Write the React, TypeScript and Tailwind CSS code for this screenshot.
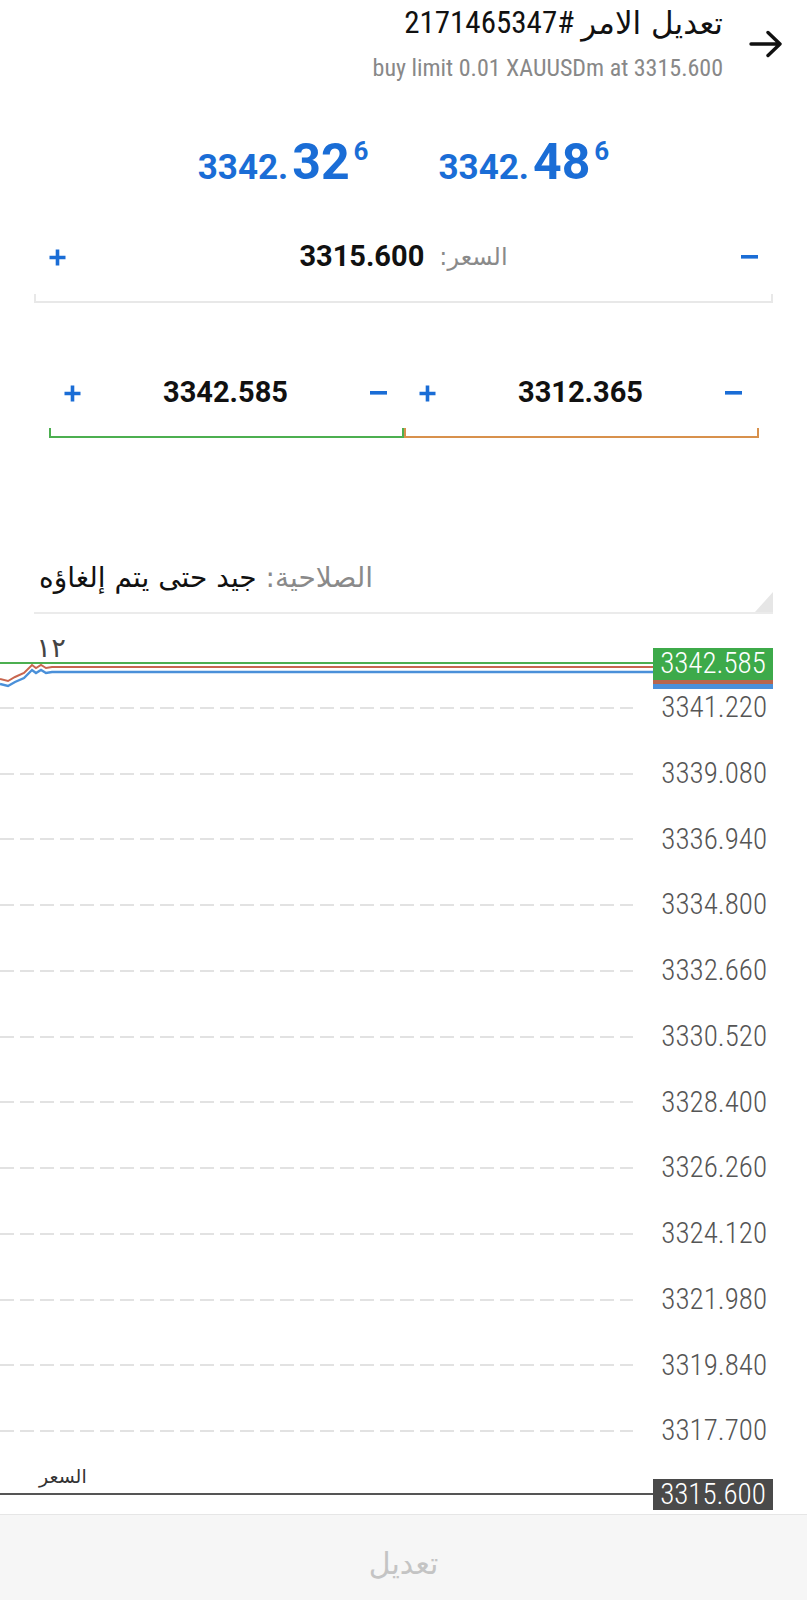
const NARROW = "font-['Liberation_Sans_Narrow','Roboto_Condensed',Roboto,'DejaVu_Sans',sans-serif]";
const ROBOTO = "font-['Roboto','DejaVu_Sans',sans-serif]";
const ARABIC = "font-['DejaVu_Sans',sans-serif]";

const axisLabels = [
  "3341.220",
  "3339.080",
  "3336.940",
  "3334.800",
  "3332.660",
  "3330.520",
  "3328.400",
  "3326.260",
  "3324.120",
  "3321.980",
  "3319.840",
  "3317.700",
];

function PlusIcon() {
  return (
    <svg width="17" height="17" viewBox="0 0 17 17">
      <path d="M8.5 0.5v16M0.5 8.5h16" stroke="#1a6dd6" strokeWidth="3.6" />
    </svg>
  );
}

function MinusIcon() {
  return (
    <svg width="17" height="4" viewBox="0 0 17 4">
      <rect width="17" height="3.6" fill="#1a6dd6" />
    </svg>
  );
}

function ArrowIcon() {
  return (
    <svg width="34" height="28" viewBox="0 0 34 28" fill="none">
      <path d="M2 14H31M19 2.5L31 14L19 25.5" stroke="#111" strokeWidth="3.4" strokeLinecap="round" strokeLinejoin="round" />
    </svg>
  );
}

function Quote({ head, tail }: { head: string; tail: string }) {
  return (
    <div className={`${ROBOTO} flex items-baseline font-bold text-[#1a6dd6] leading-none`}>
      <span className="text-[35px]">{head}</span>
      <span className="ml-[4px] text-[50px]">{tail}</span>
      <span className="ml-[4px] mt-[1px] self-start text-[26px]">6</span>
    </div>
  );
}

function Stepper({ value, line }: { value: string; line: string }) {
  return (
    <div className="flex flex-1 flex-col">
      <div className="flex h-[50px] items-center justify-between pl-[15px] pr-[17px]">
        <PlusIcon />
        <span className={`${ROBOTO} text-[29px] font-bold text-[#111]`}>{value}</span>
        <MinusIcon />
      </div>
      <div className={`mt-[10px] h-[10px] border-x-2 border-b-2 ${line}`} />
    </div>
  );
}

function Chart() {
  return (
    <div className="relative h-[874px] overflow-hidden">
      {/* price lines near the top of the chart */}
      <svg className="absolute left-0 top-[6px]" width="653" height="44" viewBox="0 0 653 44" fill="none">
        <path d="M0 17H653" stroke="#4caf50" strokeWidth="2" />
        <polyline
          points="0,33 8,35 15,31 24,27 32,19 36,22 41,19 46,22 52,21 653,21"
          stroke="#c8664f"
          strokeWidth="2"
        />
        <polyline
          points="0,38 8,40 15,36 24,32 32,24 36,27 41,24 46,27 52,26 653,26"
          stroke="#4a90d9"
          strokeWidth="2.4"
        />
      </svg>
      <span className={`${ARABIC} absolute left-[36px] top-[-13px] text-[28px] text-[#444]`}>١٢</span>

      {/* take profit tag */}
      <div className="absolute right-[34px] top-[8px] flex w-[120px] flex-col">
        <div className={`${NARROW} flex h-[32px] items-center justify-center bg-[#3daa4a] text-[29px] font-light text-white`}>
          3342.585
        </div>
        <div className="h-[4px] bg-[#b8664c]" />
        <div className="h-[5px] bg-[#4a90d9]" />
      </div>

      <div className="flex flex-col pt-[35px]">
        {axisLabels.map((l) => (
          <div key={l} className="flex h-[65.75px] items-center">
            <div className="h-[2px] w-[633px] bg-[repeating-linear-gradient(to_right,#e2e2e2_0_14px,transparent_14px_20px)]" />
            <span className={`${NARROW} flex-1 pr-[40px] text-right text-[29px] font-light text-[#555]`}>{l}</span>
          </div>
        ))}
        <div className="flex items-end">
          <div className="flex w-[653px] flex-col">
            <span className={`${ARABIC} pl-[39px] text-[19px] leading-[24px] text-[#333]`}>السعر</span>
            <div className="mb-[15px] mt-[5px] h-[2px] bg-[#555]" />
          </div>
          <div className={`${NARROW} flex h-[31px] w-[120px] items-center justify-center bg-[#4a4a4a] text-[29px] font-light text-white`}>
            3315.600
          </div>
        </div>
      </div>
    </div>
  );
}

export default function App() {
  return (
    <div className="flex h-[1600px] w-[807px] flex-col overflow-hidden bg-white">
      {/* Header */}
      <div className="flex h-[96px] items-start justify-end gap-[26px] pr-[24px] pt-[5px]">
        <div className="flex flex-col items-end">
          <div className="flex h-[37px] items-center gap-[7px] text-[#111]">
            <span className={`${NARROW} text-[31px]`}>2171465347#</span>
            <span dir="rtl" className={`${ARABIC} text-[31px]`}>تعديل الامر</span>
          </div>
          <div className={`${NARROW} mt-[12px] text-[24px] leading-[28px] text-[#888]`}>
            buy limit 0.01 XAUUSDm at 3315.600
          </div>
        </div>
        <div className="mt-[25px]">
          <ArrowIcon />
        </div>
      </div>

      {/* Bid / ask */}
      <div className="flex h-[104px] justify-center gap-[70px] pt-[41px]">
        <Quote head="3342." tail="32" />
        <Quote head="3342." tail="48" />
      </div>

      {/* Price field */}
      <div className="mx-[34px] mt-[32px]">
        <div className="flex h-[50px] items-center justify-between px-[15px]">
          <PlusIcon />
          <div className="flex items-center gap-[15px]">
            <span className={`${ROBOTO} text-[29px] font-bold text-[#111]`}>3315.600</span>
            <span dir="rtl" className={`${ARABIC} text-[24px] text-[#8a8a8a]`}>السعر:</span>
          </div>
          <MinusIcon />
        </div>
        <div className="mt-[12px] h-[9px] border-x-2 border-b-2 border-[#e8e8e8]" />
      </div>

      {/* Take profit / stop loss */}
      <div className="ml-[49px] mr-[48px] mt-[65px] flex">
        <Stepper value="3342.585" line="border-[#4caf50]" />
        <Stepper value="3312.365" line="border-[#d8914c]" />
      </div>

      {/* Expiration */}
      <div className="relative mx-[34px] mt-[120px] border-b-2 border-[#ebebeb] pb-[14px]">
        <div className="flex h-[40px] items-center pl-[5px]">
          <span dir="rtl" className={`${ARABIC} text-[28px] text-[#111]`}>
            <span className="text-[#8a8a8a]">الصلاحية:</span> جيد حتى يتم إلغاؤه
          </span>
        </div>
        <svg className="absolute bottom-0 right-0" width="18" height="20" viewBox="0 0 18 20">
          <path d="M0 20L18 0V20Z" fill="#e6e6e6" />
        </svg>
      </div>

      <div className="mt-[26px]">
        <Chart />
      </div>

      {/* Bottom action */}
      <div className="flex flex-1 items-center justify-center border-t border-[#e6e6e6] bg-[#f6f6f6] pt-[12px]">
        <span className={`${ARABIC} text-[30px] text-[#c4c4c4]`}>تعديل</span>
      </div>
    </div>
  );
}
